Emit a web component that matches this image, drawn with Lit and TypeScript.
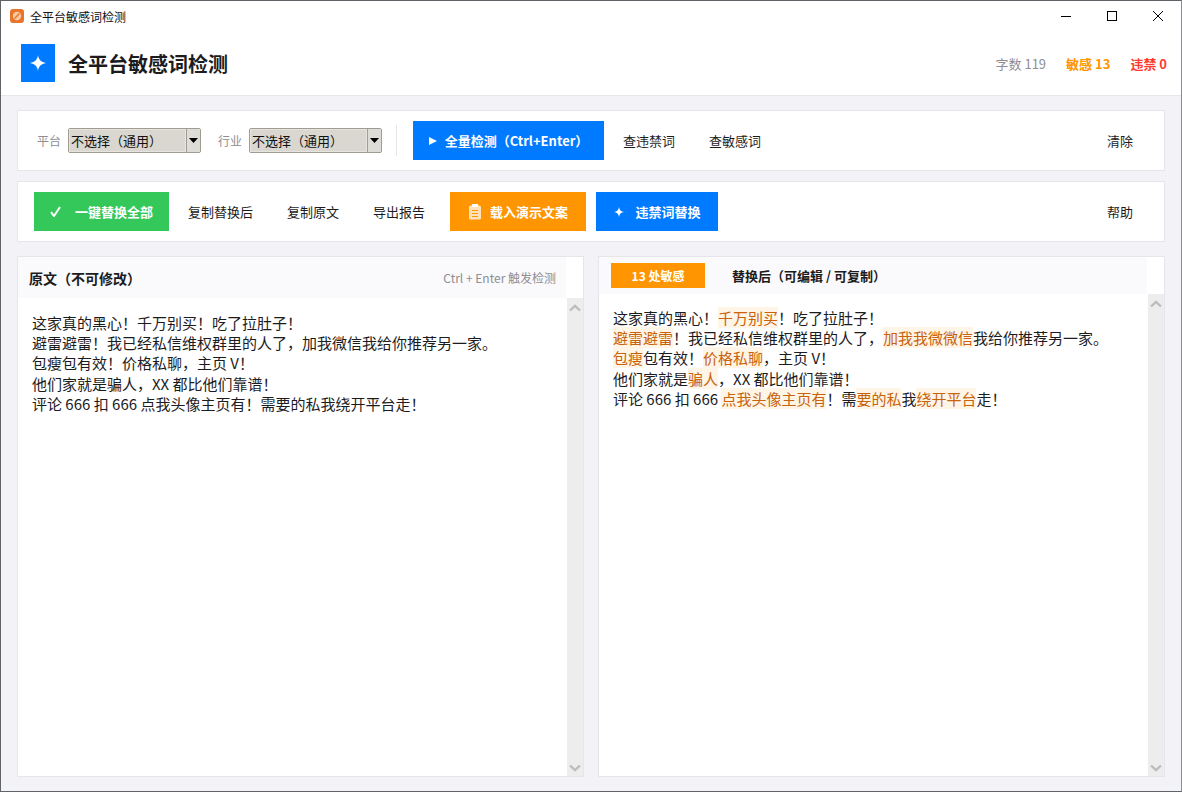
import { LitElement, css, html, svg } from 'lit';
import { customElement } from 'lit/decorators.js';

const sparkle = (size: number) => html`<svg width=${size} height=${size} viewBox="0 0 16 16">
  <path fill="#fff" d="M8 0C8.6 4.6 11 7.2 16 8 11 8.8 8.6 11.4 8 16 7.4 11.4 5 8.8 0 8 5 7.2 7.4 4.6 8 0Z" />
</svg>`;

const chevron = (d: string) => html`<svg width="12" height="8" viewBox="0 0 12 8">
  ${svg`<path fill="none" stroke="#bdbdbd" stroke-width="2.4" d=${d} />`}
</svg>`;

@customElement('app-root')
export class AppRoot extends LitElement {
  static styles = css`
    :host {
      display: block;
      height: 792px;
      box-sizing: border-box;
      border: 1px solid #5f6368;
      border-right-color: #8a8d91;
      background: #f2f2f7;
      color: #1c1c1e;
      font-family: 'Noto Sans CJK SC', 'Noto Sans', sans-serif;
      overflow: hidden;
    }

    .root {
      display: flex;
      flex-direction: column;
      height: 100%;
    }

    .titlebar {
      display: flex;
      align-items: center;
      height: 30px;
      padding-left: 9px;
      background: #fff;
      font-size: 12px;
      color: #111;
    }

    .app-icon {
      margin-right: 6px;
    }

    .win {
      margin-left: auto;
      display: flex;
    }

    .win span {
      display: flex;
      align-items: center;
      justify-content: center;
      width: 46px;
      height: 30px;
    }

    .header {
      display: flex;
      align-items: center;
      height: 64px;
      padding: 0 14px 0 20px;
      background: #fff;
      border-bottom: 1px solid #e5e5ea;
    }

    .logo {
      display: flex;
      align-items: center;
      justify-content: center;
      width: 34px;
      height: 38px;
      margin-right: 13px;
      background: #007aff;
    }

    h1 {
      margin: 0;
      font-size: 20px;
      font-weight: 700;
      color: #1c1c1e;
    }

    .stats {
      margin-left: auto;
      display: flex;
      gap: 20px;
      font-size: 13px;
    }

    .muted {
      color: #8e8e93;
    }

    .warn {
      color: #ff9500;
      font-weight: 700;
    }

    .bad {
      color: #ff3b30;
      font-weight: 700;
    }

    .main {
      flex: 1;
      min-height: 0;
      display: flex;
      flex-direction: column;
      gap: 10px;
      padding: 14px 16px;
    }

    .card {
      display: flex;
      align-items: center;
      height: 61px;
      box-sizing: border-box;
      background: #fff;
      border: 1px solid #e5e5ea;
    }

    .filters {
      padding-left: 19px;
    }

    .actions {
      padding-left: 16px;
    }

    .label {
      font-size: 12px;
      color: #8e8e93;
      margin-right: 7px;
    }

    .select {
      display: flex;
      width: 133px;
      height: 25px;
      box-sizing: border-box;
      margin-right: 17px;
      border: 1px solid #a09c92;
      border-radius: 2px;
      background: #d9d7d0;
      font-size: 13px;
      color: #111;
    }

    .select .value {
      flex: 1;
      display: flex;
      align-items: center;
      padding-left: 1px;
      border: 1px solid #e6e4de;
      white-space: pre;
    }

    .select .arrow {
      display: flex;
      align-items: center;
      justify-content: center;
      width: 13px;
      background: #dedcd6;
      border-left: 1px solid #a09c92;
    }

    .divider {
      width: 1px;
      height: 31px;
      margin: 0 16px 0 -3px;
      background: #e5e5ea;
    }

    .btn {
      display: flex;
      align-items: center;
      justify-content: center;
      gap: 8px;
      height: 39px;
      color: #fff;
      font-size: 13px;
      font-weight: 700;
      white-space: pre;
    }

    .blue {
      background: #007aff;
    }

    .green {
      background: #34c759;
    }

    .orange {
      background: #ff9500;
    }

    .ghost {
      padding: 0 17px;
      font-size: 13px;
      color: #1c1c1e;
      white-space: pre;
    }

    .push {
      margin-left: auto;
      margin-right: 14px;
    }

    .panels {
      flex: 1;
      min-height: 0;
      margin-top: 4px;
      display: grid;
      grid-template-columns: 1fr 1fr;
      gap: 14px;
    }

    .panel {
      display: flex;
      flex-direction: column;
      min-width: 0;
      background: #fff;
      border: 1px solid #e5e5ea;
    }

    .head {
      display: flex;
      align-items: center;
      margin-right: 17px;
      background: #fafafc;
    }

    .head.src {
      height: 41px;
      padding: 0 10px 0 11px;
    }

    .head.out {
      height: 37px;
      padding: 0 12px;
    }

    .head-title {
      font-size: 14px;
      font-weight: 700;
      color: #1c1c1e;
    }

    .hint {
      margin-left: auto;
      font-size: 12px;
      color: #8e8e93;
    }

    .badge {
      display: flex;
      align-items: center;
      justify-content: center;
      width: 94px;
      height: 25px;
      background: #ff9500;
      color: #fff;
      font-size: 12px;
      font-weight: 700;
      margin-right: 27px;
    }

    .out .head-title {
      font-size: 13px;
    }

    .body {
      flex: 1;
      min-height: 0;
      display: flex;
    }

    .text {
      flex: 1;
      padding: 15px 14px;
      font-size: 15px;
      line-height: 20.2px;
      color: #1c1c1e;
      white-space: pre-wrap;
    }

    .text.out-text {
      padding-top: 14px;
    }

    mark {
      background: #fff5e6;
      color: #c9620c;
    }

    .scroll {
      display: flex;
      flex-direction: column;
      align-items: center;
      justify-content: space-between;
      width: 16px;
      box-sizing: border-box;
      padding: 6px 0 4px;
      background: #ededed;
    }
  `;

  render() {
    return html`
      <div class="root">
        <div class="titlebar">
          <svg class="app-icon" width="14" height="14" viewBox="0 0 14 14">
            <rect width="14" height="14" rx="3" fill="#e8752a" />
            <circle cx="7" cy="7" r="4.2" fill="#f6c9a3" />
            <path d="M4.6 9.4 9.4 4.6" stroke="#e8752a" stroke-width="1.4" />
          </svg>
          全平台敏感词检测
          <div class="win">
            <span>
              <svg width="10" height="10" viewBox="0 0 10 10"><path d="M0 5.5H10" stroke="#000" /></svg>
            </span>
            <span>
              <svg width="10" height="10" viewBox="0 0 10 10"><rect x=".5" y=".5" width="9" height="9" fill="none" stroke="#000" /></svg>
            </span>
            <span>
              <svg width="10" height="10" viewBox="0 0 10 10"><path d="M0 0 10 10M10 0 0 10" stroke="#000" /></svg>
            </span>
          </div>
        </div>

        <header class="header">
          <div class="logo">${sparkle(16)}</div>
          <h1>全平台敏感词检测</h1>
          <div class="stats">
            <span class="muted">字数 119</span>
            <span class="warn">敏感 13</span>
            <span class="bad">违禁 0</span>
          </div>
        </header>

        <main class="main">
          <section class="card filters">
            <span class="label">平台</span>
            <div class="select">
              <span class="value">不选择（通用）</span>
              <span class="arrow"><svg width="9" height="5" viewBox="0 0 9 5"><path d="M0 0H9L4.5 5Z" fill="#000" /></svg></span>
            </div>
            <span class="label">行业</span>
            <div class="select">
              <span class="value">不选择（通用）</span>
              <span class="arrow"><svg width="9" height="5" viewBox="0 0 9 5"><path d="M0 0H9L4.5 5Z" fill="#000" /></svg></span>
            </div>
            <div class="divider"></div>
            <div class="btn blue" style="width:191px">
              <svg width="8" height="8" viewBox="0 0 8 8"><path d="M0 0 8 4 0 8Z" fill="#fff" /></svg>
              <span>全量检测（Ctrl+Enter）</span>
            </div>
            <span class="ghost" style="margin-left:2px">查违禁词</span>
            <span class="ghost">查敏感词</span>
            <span class="ghost push">清除</span>
          </section>

          <section class="card actions">
            <div class="btn green" style="width:135px;gap:14px">
              <svg width="11" height="11" viewBox="0 0 11 11"><path d="M1 6.2 4 10 10 1" fill="none" stroke="#fff" stroke-width="2" /></svg>
              <span>一键替换全部</span>
            </div>
            <span class="ghost" style="margin-left:2px">复制替换后</span>
            <span class="ghost">复制原文</span>
            <span class="ghost" style="margin-right:8px">导出报告</span>
            <div class="btn orange" style="width:136px;margin-right:10px">
              <svg width="14" height="16" viewBox="0 0 14 16">
                <rect x="1" y="1.5" width="12" height="14" rx="1.5" fill="#ffe2b8" />
                <rect x="4" y="0" width="6" height="3" fill="#fff" />
                <path d="M4 6.5H10M4 9.5H10M4 12.5H10" stroke="#ff9500" stroke-width="1.2" />
              </svg>
              <span>载入演示文案</span>
            </div>
            <div class="btn blue" style="width:122px;gap:12px">
              ${sparkle(10)}
              <span>违禁词替换</span>
            </div>
            <span class="ghost push">帮助</span>
          </section>

          <div class="panels">
            <section class="panel">
              <div class="head src">
                <span class="head-title">原文（不可修改）</span>
                <span class="hint">Ctrl + Enter 触发检测</span>
              </div>
              <div class="body">
                <div class="text">这家真的黑心！千万别买！吃了拉肚子！
避雷避雷！我已经私信维权群里的人了，加我微信我给你推荐另一家。
包瘦包有效！价格私聊，主页 V！
他们家就是骗人，XX 都比他们靠谱！
评论 666 扣 666 点我头像主页有！需要的私我绕开平台走！</div>
                <div class="scroll">${chevron('M1 6.5 6 1.8 11 6.5')}${chevron('M1 1.5 6 6.2 11 1.5')}</div>
              </div>
            </section>

            <section class="panel out">
              <div class="head out">
                <span class="badge">13 处敏感</span>
                <span class="head-title">替换后（可编辑 / 可复制）</span>
              </div>
              <div class="body">
                <div class="text out-text">这家真的黑心！<mark>千万别买</mark>！吃了拉肚子！
<mark>避雷避雷</mark>！我已经私信维权群里的人了，<mark>加我我微微信</mark>我给你推荐另一家。
<mark>包瘦</mark>包有效！<mark>价格私聊</mark>，主页 V！
他们家就是<mark>骗人</mark>，XX 都比他们靠谱！
评论 666 扣 666 <mark>点我头像主页有</mark>！需<mark>要的私</mark>我<mark>绕开平台</mark>走！</div>
                <div class="scroll">${chevron('M1 6.5 6 1.8 11 6.5')}${chevron('M1 1.5 6 6.2 11 1.5')}</div>
              </div>
            </section>
          </div>
        </main>
      </div>
    `;
  }
}

declare global {
  interface HTMLElementTagNameMap {
    'app-root': AppRoot;
  }
}
